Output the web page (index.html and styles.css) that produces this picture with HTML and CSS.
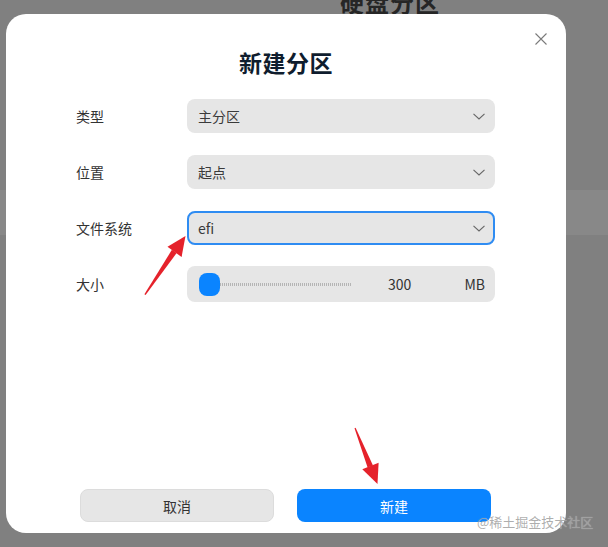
FILE: index.html
```html
<!DOCTYPE html>
<html lang="zh">
<head>
<meta charset="utf-8">
<link rel="stylesheet" href="styles.css">
</head>
<body>
<div class="screen">
  <div class="backdrop">
    <div class="page-title">硬盘分区</div>
    <div class="page-row"></div>
  </div>

  <div class="dialog">
    <button class="close" aria-label="关闭">
      <svg width="12" height="12" viewBox="0 0 12 12"><path d="M0.5 0.5L11.5 11.5M11.5 0.5L0.5 11.5" stroke="#7a7a7a" stroke-width="1.1" fill="none"/></svg>
    </button>
    <h1 class="title">新建分区</h1>
    <div class="form">
      <div class="row">
        <span class="label">类型</span>
        <div class="field select"><span>主分区</span><svg class="chev" width="12" height="7" viewBox="0 0 12 7"><path d="M0.5 0.8L6 6L11.5 0.8" stroke="#666" stroke-width="1.1" fill="none"/></svg></div>
      </div>
      <div class="row">
        <span class="label">位置</span>
        <div class="field select"><span>起点</span><svg class="chev" width="12" height="7" viewBox="0 0 12 7"><path d="M0.5 0.8L6 6L11.5 0.8" stroke="#666" stroke-width="1.1" fill="none"/></svg></div>
      </div>
      <div class="row">
        <span class="label">文件系统</span>
        <div class="field select focused"><span>efi</span><svg class="chev" width="12" height="7" viewBox="0 0 12 7"><path d="M0.5 0.8L6 6L11.5 0.8" stroke="#666" stroke-width="1.1" fill="none"/></svg></div>
      </div>
      <div class="row">
        <span class="label">大小</span>
        <div class="field slider">
          <span class="handle"></span>
          <span class="track"></span>
          <span class="value">300</span>
          <span class="unit">MB</span>
        </div>
      </div>
    </div>
    <div class="actions">
      <button class="btn cancel">取消</button>
      <button class="btn primary">新建</button>
    </div>
  </div>

  <svg class="arrows" width="608" height="547" viewBox="0 0 608 547">
    <polygon fill="#e5222b" points="144.4,294.3 145.6,294.9 176.6,253.1 171.9,249.8"/>
    <polygon fill="#e5222b" points="185.5,236 167.5,246.8 181.6,257"/>
    <polygon fill="#e5222b" points="354.5,428.2 355.6,427.8 373,465.6 367.6,467.6"/>
    <polygon fill="#e5222b" points="377.5,484 362.3,469.3 378.6,462.8"/>
  </svg>

  <div class="watermark">@稀土掘金技术社区</div>
</div>
</body>
</html>
```

FILE: styles.css
```css
* { box-sizing: border-box; }
html, body { margin: 0; padding: 0; }
body {
  width: 608px;
  height: 547px;
  overflow: hidden;
  background: #808080;
  font-family: "Noto Sans CJK SC", "Noto Sans", sans-serif;
}
.screen {
  position: relative;
  width: 608px;
  height: 547px;
}
.backdrop {
  display: flex;
  flex-direction: column;
  width: 608px;
  height: 547px;
}
.page-title {
  margin: -14px 0 0 340px;
  font-size: 24px;
  font-weight: 700;
  line-height: 32px;
  color: #262626;
  letter-spacing: 1px;
}
.page-row {
  margin-top: 172px;
  height: 45px;
  background: #888888;
}
.dialog {
  position: absolute;
  left: 6px;
  top: 14px;
  width: 560px;
  height: 519px;
  background: #ffffff;
  border-radius: 20px;
  display: flex;
  flex-direction: column;
}
.close {
  position: absolute;
  top: 19px;
  right: 19px;
  width: 12px;
  height: 12px;
  padding: 0;
  border: 0;
  background: none;
  display: flex;
}
.title {
  margin: 33px 0 0 0;
  text-align: center;
  font-size: 23px;
  line-height: 30px;
  font-weight: 700;
  color: #0f1d2e;
  letter-spacing: 0.5px;
}
.form {
  margin-top: 22px;
  padding-left: 70px;
  display: flex;
  flex-direction: column;
  gap: 22px;
}
.row {
  display: flex;
  align-items: center;
  height: 34px;
}
.label {
  width: 111px;
  font-size: 14px;
  color: #333333;
}
.field {
  width: 308px;
  height: 34px;
  background: #e6e6e6;
  border-radius: 8px;
  display: flex;
  align-items: center;
  font-size: 14px;
  color: #3a3a3a;
}
.select {
  padding: 0 10px 0 11px;
  justify-content: space-between;
}
.focused {
  border: 2px solid #2f8cf2;
  padding-left: 9px;
  padding-right: 8px;
}
.slider {
  height: 36px;
  padding: 0 10px 0 12px;
}
.handle {
  width: 21px;
  height: 23px;
  border-radius: 8px;
  background: #0a84ff;
  flex: none;
}
.track {
  width: 132px;
  height: 3px;
  background: repeating-linear-gradient(90deg, #b5b5b5 0 1px, transparent 1px 2px);
  flex: none;
}
.value {
  margin-left: 36px;
  color: #333;
}
.unit {
  margin-left: auto;
  color: #333;
}
.actions {
  margin-top: auto;
  margin-bottom: 11px;
  padding-left: 74px;
  display: flex;
  gap: 23px;
}
.btn {
  width: 194px;
  height: 33px;
  border-radius: 8px;
  border: 0;
  font-family: "Noto Sans CJK SC", "Noto Sans", sans-serif;
  font-size: 14px;
  padding: 0;
}
.cancel {
  background: #e6e6e6;
  color: #333;
  border: 1px solid #dcdcdc;
}
.primary {
  background: #0a84ff;
  color: #ffffff;
}
.arrows {
  position: absolute;
  left: 0;
  top: 0;
  pointer-events: none;
}
.watermark {
  position: absolute;
  left: 477px;
  top: 513px;
  font-size: 13px;
  line-height: 18px;
  color: rgba(160, 160, 160, 0.85);
  text-shadow: 0 0 1px rgba(255,255,255,0.4);
}
```
